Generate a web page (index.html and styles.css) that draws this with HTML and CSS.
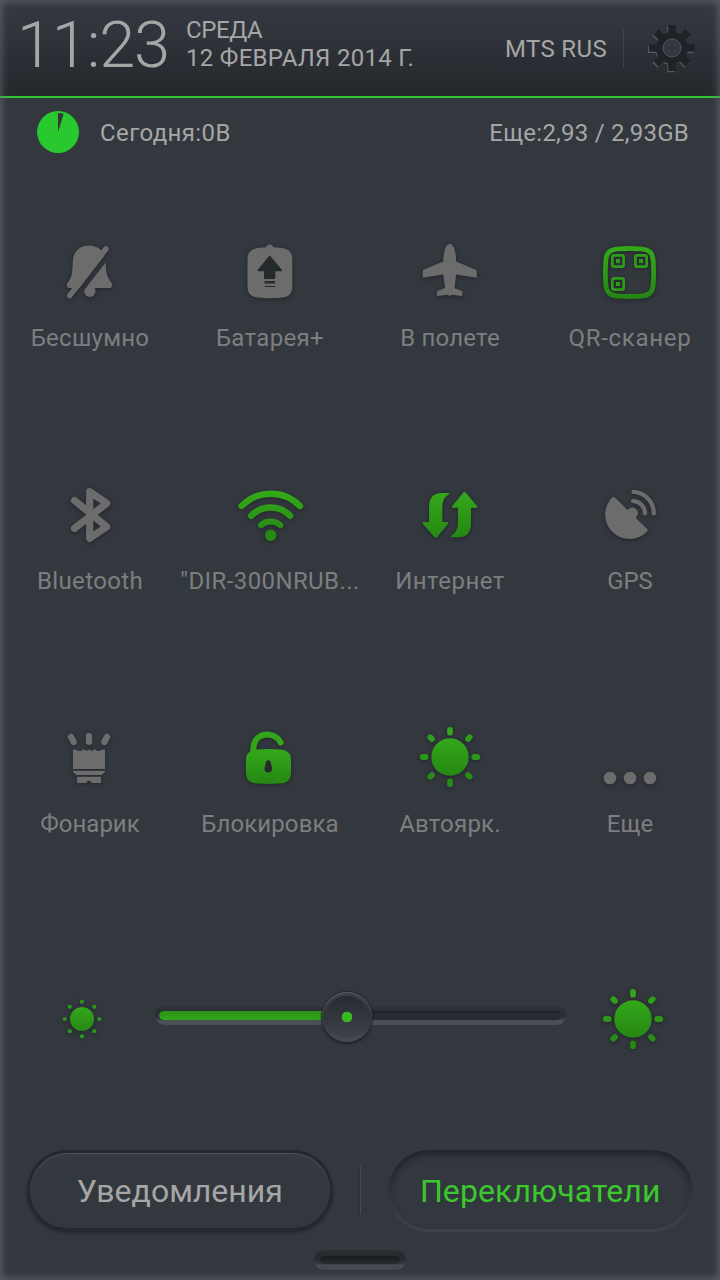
FILE: index.html
```
<!DOCTYPE html>
<html lang="ru">
<head>
<meta charset="utf-8">
<title>Переключатели</title>
<link rel="stylesheet" href="styles.css">
</head>
<body>
<svg class="defs" width="0" height="0" aria-hidden="true">
  <defs>
    <linearGradient id="on" x1="0" y1="0" x2="0" y2="1">
      <stop offset="0" stop-color="#34a81b"/>
      <stop offset="1" stop-color="#258713"/>
    </linearGradient>
    <linearGradient id="wifi" gradientUnits="userSpaceOnUse" x1="0" y1="490" x2="0" y2="541">
      <stop offset="0" stop-color="#34aa1a"/>
      <stop offset="1" stop-color="#258313"/>
    </linearGradient>
    <mask id="cut" maskUnits="userSpaceOnUse" x="50" y="232" width="80" height="80">
      <rect x="50" y="232" width="80" height="80" fill="#fff"/>
      <path d="M112 250L73 300.400" stroke="#000" stroke-width="5.200"/>
    </mask>
    <g id="sun">
      <circle r="18.7" fill="url(#on)"/>
      <g class="rays">
        <path d="M0-27.2V-24.3" stroke="#34a31d"/><path d="M19.7-19.7L18-18" stroke="#319e1b"/>
        <path d="M27.2 0H24.3" stroke="#2c9718"/><path d="M19.7 19.7L18 18" stroke="#278d15"/>
        <path d="M0 27.2V24.3" stroke="#278a15"/><path d="M-19.7 19.7L-18 18" stroke="#278d15"/>
        <path d="M-27.2 0H-24.3" stroke="#2c9718"/><path d="M-19.7-19.7L-18-18" stroke="#319e1b"/>
      </g>
    </g>
  </defs>
</svg>
<main class="shade">
  <header class="header">
    <div class="clock">11:23</div>
    <div class="date"><span class="weekday">СРЕДА</span><span class="day">12 ФЕВРАЛЯ 2014 Г.</span></div>
    <div class="carrier">MTS RUS</div>
    <svg class="gear" viewBox="644 20 56 56" width="56" height="56">
      <g class="gear-light" transform="translate(-1 1.2)">
        <circle cx="672" cy="48" r="14" />
        <path d="M672 25V71M649 48H695M656 32L688 64M688 32L656 64"/>
      </g>
      <g class="gear-dark">
        <circle cx="672" cy="48" r="14.5"/>
        <path d="M672 25V71M649 48H695M656 32L688 64M688 32L656 64"/>
      </g>
      <circle class="gear-hole" cx="672" cy="48" r="9"/>
    </svg>
  </header>
  <section class="usage">
    <svg class="pie" viewBox="0 0 42 42" width="42" height="42"><circle cx="21" cy="21" r="21" fill="#2ac82f"/><path d="M21 21V2Q24 2 26.6 3Z" fill="#30383e"/></svg>
    <span class="today">Сегодня:0В</span>
    <span class="left">Еще:2,93 / 2,93GB</span>
  </section>
  <section class="grid">
    <div class="tile">
      <svg class="icon" viewBox="50 232 80 80">
        <g mask="url(#cut)">
          <path d="M89 245.500C79 245.500 73 252 72.700 263C72.500 274 71 278.500 67.800 282.500C65.500 285.500 67 288 69.500 288H109.500C112.500 288 113 284.500 111 282C107 277.500 106 273 105.500 262C105 252 99 245.500 89 245.500Z"/>
          <circle cx="89.800" cy="291.300" r="5.700"/>
        </g>
        <path class="line" stroke-width="5.500" d="M105.800 249L69.700 295.600"/>
      </svg>
      <span class="label l-silent">Бесшумно</span>
    </div>
    <div class="tile">
      <svg class="icon" viewBox="230 232 80 80">
        <circle cx="269.700" cy="248" r="3.500"/>
        <path d="M258 248C263 247 277 247 282 248C289 249 292.300 252 292.300 260V286C292.300 294 289 297 281 297.700C275 298.300 265 298.300 259 297.700C251 297 247.500 294 247.500 286V260C247.500 252 251 249 258 248Z"/>
        <path class="dark" d="M269.700 255.300L282 270Q282 271.300 281 271.300H275.300V278Q275 279 274 279H265Q264 279 264 278V271.300H258.300Q257 271 257.500 270ZM264.500 281H275V283.500H264.500ZM264.500 286H275V287H264.500Z"/>
      </svg>
      <span class="label l-battery">Батарея+</span>
    </div>
    <div class="tile">
      <svg class="icon" viewBox="410 232 80 80">
        <path d="M449.700 244C446 244 443.300 251 443.300 261.500L423.500 269.800Q422.700 270.500 422.700 272V277.700L443.300 274.500L445 288L438 290.800Q437 291.500 437 292.500V296L448 294.800L449.700 296.300L451.400 294.800L462.300 296V292.500Q462.300 291.500 461.300 290.800L454.500 288L456.100 274.500L476.800 277.700V272Q476.800 270.500 476 269.800L456.100 261.500C456.100 251 453.500 244 449.700 244Z"/>
      </svg>
      <span class="label l-flight">В полете</span>
    </div>
    <div class="tile">
      <svg class="icon on" viewBox="590 232 80 80">
        <path fill="none" stroke="url(#on)" stroke-width="4.800" d="M619 248.800Q629.500 248.200 640 248.800C650 249.400 652.800 253 653.300 262Q653.900 272.500 653.300 283C652.800 292 650 295.600 640 296.200Q629.500 296.800 619 296.200C609 295.600 606.200 292 605.700 283Q605.100 272.500 605.700 262C606.200 253 609 249.400 619 248.800Z"/>
        <g fill="#2c9c18">
          <path fill-rule="evenodd" d="M614 254H622Q625 254 625 257V265Q625 268 622 268H614Q611 268 611 265V257Q611 254 614 254ZM614.500 256.700Q613.700 256.700 613.700 257.500V264.500Q613.700 265.300 614.500 265.300H621.500Q622.300 265.300 622.300 264.500V257.500Q622.300 256.700 621.500 256.700ZM616 259H620V263H616Z" id="qr"/>
          <use href="#qr" x="23"/><use href="#qr" y="23"/>
        </g>
      </svg>
      <span class="label l-qr">QR-сканер</span>
    </div>

    <div class="tile">
      <svg class="icon" viewBox="50 475 80 80">
        <path class="line" stroke-width="7.200" d="M74.500 500.500L106.700 526.700L89.700 538.300V491.700L106.700 503.300L74.500 528.300"/>
      </svg>
      <span class="label l-bt">Bluetooth</span>
    </div>
    <div class="tile">
      <svg class="icon on" viewBox="230 475 80 80">
        <g fill="none" stroke="url(#wifi)" stroke-linecap="round" stroke-width="6.500">
          <path d="M241.500 506A41 41 0 0 1 299.900 506"/>
          <path d="M251.300 515.800A26.600 26.600 0 0 1 290.100 515.800"/>
          <path d="M261 525.200A14.500 14.500 0 0 1 280.400 525.200" stroke-width="6"/>
        </g>
        <circle cx="270.700" cy="535.300" r="5.700" fill="#278a15"/>
      </svg>
      <span class="label l-wifi">"DIR-300NRUB...</span>
    </div>
    <div class="tile">
      <svg class="icon on" viewBox="410 475 80 80">
        <g fill="url(#on)">
          <path d="M448 493H442C433 493 429 498 429 507V522H424Q422 522 423 524L434.500 537.300Q436 538.500 437 537.300L447.800 524Q449 522 447 522H442.300V508C442.300 501 444.500 497 448.700 494.500Q449.500 493 448 493Z"/>
          <path d="M452 537.300H459C467 537.300 471 532 471 523V507.800H476Q478 507.800 477 506L465.700 492.500Q464.500 491.300 463.300 492.500L452.300 506Q451 507.800 453 507.800H458V522C458 529 455.500 533.300 451.500 535.500Q450.500 537.300 452 537.300Z"/>
        </g>
      </svg>
      <span class="label l-net">Интернет</span>
    </div>
    <div class="tile">
      <svg class="icon" viewBox="590 475 80 80">
        <path class="edge" d="M613.600 499L645.500 530.300A22.300 22.300 0 1 1 613.600 499Z"/>
        <circle cx="632.300" cy="513.300" r="5.700"/>
        <path class="line" stroke-width="4.200" d="M633 501A12.500 12.500 0 0 1 645 513.500M633.500 491.800A21.500 21.500 0 0 1 653.800 513.500"/>
      </svg>
      <span class="label l-gps">GPS</span>
    </div>

    <div class="tile">
      <svg class="icon" viewBox="50 718 80 80">
        <path class="line" stroke-width="6.500" d="M89 736.300V741.700M71 737L73.600 741.800M107 737L104.400 741.800"/>
        <path d="M73 749.500Q75 749 78 750.500Q80.500 752 83.500 749Q86 752 89 749.500Q92 752 94.500 749Q97.500 752 100 750.500Q103 749 105 749.500V769H73ZM73 770.700H105V772L101.500 775H76.500L73 772ZM77 776.700H101V783H91.300A2.300 2.300 0 0 0 86.700 783H77Z"/>
      </svg>
      <span class="label l-torch">Фонарик</span>
    </div>
    <div class="tile">
      <svg class="icon on" viewBox="230 718 80 80">
        <path fill="none" stroke="#32a51b" stroke-width="6" stroke-linecap="round" d="M253.400 754V748.500C253.400 733 273.500 729.500 280.700 742.500"/>
        <path fill="url(#on)" d="M257 749.500Q268.500 748.700 280 749.500Q291 750 291 760V773Q291 783 280 783.500Q268.500 784.300 257 783.500Q246 783 246 773V760Q246 750 257 749.500Z"/>
        <path class="dark" d="M268.300 760.300Q271 760.300 271 764L272.200 768.500A3.900 3.900 0 1 1 264.400 768.500L265.600 764Q265.600 760.300 268.300 760.300Z"/>
      </svg>
      <span class="label l-lock">Блокировка</span>
    </div>
    <div class="tile">
      <svg class="icon on" viewBox="-40 -39 80 80"><use href="#sun"/></svg>
      <span class="label l-auto">Автоярк.</span>
    </div>
    <div class="tile">
      <svg class="icon" viewBox="590 718 80 80"><circle cx="610" cy="778" r="6.300"/><circle cx="630" cy="778" r="6.300"/><circle cx="650" cy="778" r="6.300"/></svg>
      <span class="label l-more">Еще</span>
    </div>
  </section>

  <section class="brightness">
    <svg class="icon on" viewBox="-40 -40 80 80">
      <circle r="12" fill="url(#on)"/>
      <g fill="#2c9718"><circle cy="-17.300" r="2.100"/><circle cy="17.300" r="2.100"/><circle cx="17.300" r="2.100"/><circle cx="-17.300" r="2.100"/><circle cx="12.200" cy="-12.200" r="2.100"/><circle cx="12.200" cy="12.200" r="2.100"/><circle cx="-12.200" cy="12.200" r="2.100"/><circle cx="-12.200" cy="-12.200" r="2.100"/></g>
    </svg>
    <div class="slider">
      <div class="groove"><div class="slot"><div class="fill"></div></div></div>
      <div class="knob"><div class="knob-face"></div></div>
    </div>
    <svg class="icon on" viewBox="-40 -40 80 80"><use href="#sun"/></svg>
  </section>

  <nav class="tabs">
    <div class="tab raised"><span class="t-notes">Уведомления</span></div>
    <div class="separator"></div>
    <div class="tab pressed"><div class="well"><span class="t-switch">Переключатели</span></div></div>
  </nav>
  <div class="handle"><div class="handle-slot"></div></div>
</main>
</body>
</html>
```
FILE: styles.css
```
* { box-sizing: border-box; }
body { margin: 0; background: #33373e; font-family: Roboto, "Noto Sans", sans-serif; }
.defs { position: absolute; }
.shade {
  position: relative;
  width: 720px;
  height: 1280px;
  overflow: hidden;
  display: flex;
  flex-direction: column;
  background: #33373e;
  color: #a6a6a6;
}
/* soft light rim round the panel */
.shade::after {
  content: "";
  position: absolute;
  inset: 0;
  box-shadow: inset 0 0 8px 1px rgba(112, 117, 127, .7);
  pointer-events: none;
}
.header {
  flex: none;
  height: 98px;
  display: flex;
  align-items: flex-start;
  padding-left: 17px;
  border-bottom: 2px solid #31c431;
  background: linear-gradient(#343942, #2f333a 40%, #24282c);
  white-space: nowrap;
}
.clock { width: 169px; margin-top: 7px; font-size: 65px; line-height: 76px; font-weight: 300; letter-spacing: -1.2px; }
.date { width: 319px; margin-top: 16px; font-size: 24px; line-height: 28px; }
.date span { display: block; }
.weekday { letter-spacing: -.4px; }
.day { letter-spacing: .3px; }
.carrier {
  width: 119px;
  height: 40px;
  margin-top: 28px;
  font-size: 24px;
  line-height: 42px;
  letter-spacing: .35px;
  border-right: 1px solid #3d4148;
}
.gear { margin: 20px 0 0 20px; }
.gear path { fill: none; stroke-width: 7.500; }
.gear-dark { fill: #1f2327; stroke: #1f2327; }
.gear-light { fill: #555a60; stroke: #555a60; }
.gear-light circle, .gear-dark circle { stroke-width: 3; }
.gear-hole { fill: #343940; stroke: #51565c; stroke-width: 1; }

.usage { flex: none; height: 74px; display: flex; align-items: flex-start; padding: 13px 31px 0 37px; font-size: 24px; line-height: 44px; }
.today { margin-left: 21px; letter-spacing: .4px; }
.left { margin-left: auto; letter-spacing: .24px; }

.grid { flex: none; height: 729px; display: grid; grid-template-columns: repeat(4, 180px); grid-template-rows: repeat(3, 243px); }
.tile { display: flex; flex-direction: column; align-items: center; padding-top: 60px; }
.icon { display: block; flex: none; width: 80px; height: 80px; fill: #6c6c6c; filter: drop-shadow(0 1px 2px rgba(18, 22, 26, .55)); }
.line { fill: none; stroke: #6c6c6c; stroke-linecap: round; stroke-linejoin: round; }
.edge { stroke: #6c6c6c; stroke-width: 4; stroke-linejoin: round; }
.dark { fill: #252a2d; }
.rays { stroke-width: 5.800; stroke-linecap: round; }
.label { margin-top: 12px; font-size: 24px; line-height: 28px; color: #7d7e7f; white-space: nowrap; }
.l-silent { letter-spacing: .25px; }
.l-battery, .l-bt { letter-spacing: .35px; }
.l-flight, .l-auto { letter-spacing: .2px; }
.l-qr { letter-spacing: .7px; }
.l-wifi { letter-spacing: .4px; }
.l-net { letter-spacing: .5px; }
.l-lock { letter-spacing: .1px; }

.brightness { flex: none; height: 236px; display: flex; align-items: flex-start; padding: 78px 47px 0 42px; }
.slider { flex: none; position: relative; width: 411px; height: 50px; margin: 13px 27px 0 33px; }
.groove {
  height: 19px;
  margin-top: 14px;
  padding: 5px 5px 5px 4px;
  border-radius: 10px;
  background: linear-gradient(#2f333a, #2a2e34 30%, #2d3137 60%, #4b4f56 78%, #494d54);
}
.slot { height: 9px; border-radius: 5px; overflow: hidden; background: linear-gradient(#1f2327, #282c30 40%); }
.fill { width: 170px; height: 9px; border-radius: 5px 0 0 5px; background: linear-gradient(#2a8f16, #32a81a); }
.knob {
  position: absolute;
  left: 167px;
  top: 0;
  width: 50px;
  height: 50px;
  padding: 4px;
  border-radius: 50%;
  background: linear-gradient(#3b3f46, #30343a 50%, #474b52);
  box-shadow: inset 0 1px 1px #5b5f66, 0 0 1px 1px #24282c, 0 2px 3px rgba(10, 12, 15, .5);
}
.knob-face { height: 42px; border-radius: 50%; background: radial-gradient(circle, #38b81f 5px, transparent 5.600px), linear-gradient(#272b30, #3e4249); }

.tabs { flex: none; height: 113px; display: flex; align-items: flex-start; padding: 13px 27px 0; }
.tab { width: 306px; height: 82px; border-radius: 41px; font-size: 32px; line-height: 76px; text-align: center; white-space: nowrap; }
.raised {
  border: 3px solid #24282c;
  height: 81px;
  box-shadow: inset 0 1px 1px #53575c, inset 0 0 1px #4b4f55, 0 2px 3px rgba(10, 12, 15, .35);
  background: linear-gradient(#363a41, #33373e 30%);
}
.pressed { padding: 3px; background: linear-gradient(#22262b, #272b30 25%, #2e3238 50%, #383c43 75%, #3e4249); color: #3bc82d; }
.well { height: 76px; border-radius: 38px; background: #33373e; box-shadow: inset 0 4px 6px -2px rgba(20, 23, 27, .5); }
.t-switch { letter-spacing: .1px; }
.separator { width: 2px; height: 48px; margin: 16px 27px 0 26px; background: linear-gradient(90deg, #2d3136 50%, #454950 50%); }
.handle {
  width: 92px;
  height: 20px;
  margin-left: 314px;
  padding: 6px;
  border-radius: 10px;
  background: linear-gradient(#2b2f34, #25292e 35%, #2e3236 60%, #484c51 78%, #44484d);
}
.handle-slot { height: 8px; border-radius: 4px; background: linear-gradient(#181c1f, #282c2f); }
```
